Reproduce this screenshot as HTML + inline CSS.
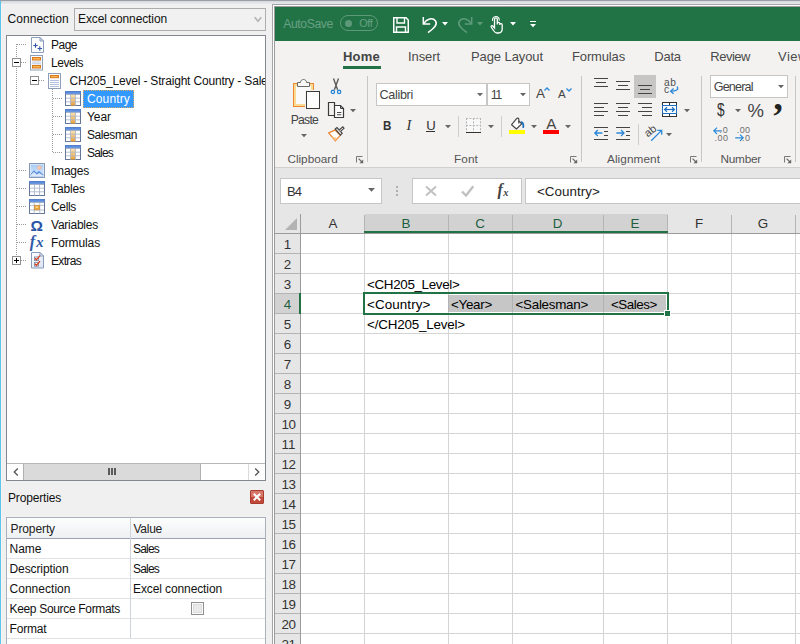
<!DOCTYPE html>
<html><head><meta charset="utf-8">
<style>
*{box-sizing:border-box;margin:0;padding:0}
html,body{width:800px;height:644px;overflow:hidden;background:#f0f0f0;font-family:"Liberation Sans",sans-serif;}
#root{position:relative;width:800px;height:644px;overflow:hidden;background:#f0f0f0}
.a{position:absolute}
.t{position:absolute;white-space:nowrap;line-height:1;color:#000}
svg{position:absolute;overflow:visible}
</style></head><body><div id="root">
<svg width="0" height="0" style="left:0;top:0"><defs><linearGradient id="og" x1="0" y1="0" x2="0" y2="1"><stop offset="0" stop-color="#fbe3b4"/><stop offset="1" stop-color="#eda032"/></linearGradient><linearGradient id="ig" x1="0" y1="0" x2="0" y2="1"><stop offset="0" stop-color="#a9cdf6"/><stop offset="1" stop-color="#d9e8fb"/></linearGradient><linearGradient id="eg" x1="0" y1="0" x2="1" y2="1"><stop offset="0" stop-color="#ffffff"/><stop offset="1" stop-color="#d9e3f2"/></linearGradient></defs></svg>
<div class="a" style="left:0px;top:0px;width:800px;height:1px;background:#9b9ea4;"></div>
<div class="a" style="left:0px;top:1px;width:800px;height:3px;background:linear-gradient(#d4d8de,#e8eaee);"></div>
<div class="a" style="left:0px;top:1px;width:1px;height:643px;background:#5bc5ee;"></div>
<div class="a" style="left:1px;top:4px;width:1px;height:640px;background:#fbf3f1;"></div>
<div class="t" style="left:7.50px;top:13.00px;font-size:12px;color:#111;letter-spacing:0.050px;">Connection</div>
<div class="a" style="left:74px;top:8px;width:192px;height:23px;background:#f1f1f1;border:1px solid #adadad"></div>
<div class="t" style="left:78.00px;top:13.00px;font-size:12px;color:#111;letter-spacing:-0.107px;">Excel connection</div>
<svg style="left:254px;top:16px" width="9" height="8" viewBox="0 0 9 8"><path d="M0.7 1.3 L4 5.2 L7.3 1.3" fill="none" stroke="#b4b4b4" stroke-width="1.7"/></svg>
<div class="a" style="left:6px;top:35px;width:260px;height:446px;background:#fff;border:1px solid #828790"></div>
<div class="a" style="left:16px;top:44px;width:1px;height:217px;background:repeating-linear-gradient(180deg,#9a9a9a 0 1px,transparent 1px 2px);"></div>
<div class="a" style="left:17px;top:44px;width:10px;height:1px;background:repeating-linear-gradient(90deg,#9a9a9a 0 1px,transparent 1px 2px);"></div>
<div class="a" style="left:17px;top:62px;width:10px;height:1px;background:repeating-linear-gradient(90deg,#9a9a9a 0 1px,transparent 1px 2px);"></div>
<div class="a" style="left:17px;top:170px;width:10px;height:1px;background:repeating-linear-gradient(90deg,#9a9a9a 0 1px,transparent 1px 2px);"></div>
<div class="a" style="left:17px;top:188px;width:10px;height:1px;background:repeating-linear-gradient(90deg,#9a9a9a 0 1px,transparent 1px 2px);"></div>
<div class="a" style="left:17px;top:206px;width:10px;height:1px;background:repeating-linear-gradient(90deg,#9a9a9a 0 1px,transparent 1px 2px);"></div>
<div class="a" style="left:17px;top:224px;width:10px;height:1px;background:repeating-linear-gradient(90deg,#9a9a9a 0 1px,transparent 1px 2px);"></div>
<div class="a" style="left:17px;top:242px;width:10px;height:1px;background:repeating-linear-gradient(90deg,#9a9a9a 0 1px,transparent 1px 2px);"></div>
<div class="a" style="left:17px;top:260px;width:10px;height:1px;background:repeating-linear-gradient(90deg,#9a9a9a 0 1px,transparent 1px 2px);"></div>
<div class="a" style="left:39px;top:80px;width:6px;height:1px;background:repeating-linear-gradient(90deg,#9a9a9a 0 1px,transparent 1px 2px);"></div>
<div class="a" style="left:52px;top:89px;width:1px;height:64px;background:repeating-linear-gradient(180deg,#9a9a9a 0 1px,transparent 1px 2px);"></div>
<div class="a" style="left:53px;top:98px;width:10px;height:1px;background:repeating-linear-gradient(90deg,#9a9a9a 0 1px,transparent 1px 2px);"></div>
<div class="a" style="left:53px;top:116px;width:10px;height:1px;background:repeating-linear-gradient(90deg,#9a9a9a 0 1px,transparent 1px 2px);"></div>
<div class="a" style="left:53px;top:134px;width:10px;height:1px;background:repeating-linear-gradient(90deg,#9a9a9a 0 1px,transparent 1px 2px);"></div>
<div class="a" style="left:53px;top:152px;width:10px;height:1px;background:repeating-linear-gradient(90deg,#9a9a9a 0 1px,transparent 1px 2px);"></div>
<svg style="left:12px;top:58px" width="9" height="9" viewBox="0 0 9 9"><rect x="0.5" y="0.5" width="8" height="8" fill="#fff" stroke="#919191"/><path d="M2 4.5H7" stroke="#000" stroke-width="1"/></svg>
<svg style="left:30px;top:76px" width="9" height="9" viewBox="0 0 9 9"><rect x="0.5" y="0.5" width="8" height="8" fill="#fff" stroke="#919191"/><path d="M2 4.5H7" stroke="#000" stroke-width="1"/></svg>
<svg style="left:12px;top:256px" width="9" height="9" viewBox="0 0 9 9"><rect x="0.5" y="0.5" width="8" height="8" fill="#fff" stroke="#919191"/><path d="M2 4.5H7" stroke="#000" stroke-width="1"/><path d="M4.5 2V7" stroke="#000" stroke-width="1"/></svg>
<svg style="left:31px;top:37px" width="14" height="16" viewBox="0 0 14 16"><path d="M0.5 0.5H9L12.5 4V15.5H0.5Z" fill="#fdfdfe" stroke="#8a9cbc"/><path d="M9 0.5V4H12.5Z" fill="#dce4f0" stroke="#8a9cbc" stroke-linejoin="round"/><path d="M2.3 8.5H6.7M4.5 6.3V10.7M6.6 11.5H11M8.8 9.3V13.7" stroke="#2f55a8" stroke-width="1.1" fill="none"/></svg>
<div class="t" style="left:51.00px;top:39.00px;font-size:12px;color:#111;letter-spacing:-0.506px;">Page</div>
<svg style="left:30px;top:55px" width="14" height="16" viewBox="0 0 14 16"><rect x="0.5" y="0.5" width="12" height="14.5" fill="#fdfdfe" stroke="#8e9db8"/><rect x="2.5" y="2.5" width="8" height="2.5" fill="#f7b458" stroke="#d9791a"/><rect x="2.5" y="10.5" width="8" height="2.5" fill="#f7b458" stroke="#d9791a"/><path d="M2 7H11M2 8.8H11" stroke="#b4c3e0" stroke-width="0.9"/></svg>
<div class="t" style="left:51.00px;top:57.00px;font-size:12px;color:#111;letter-spacing:-0.448px;">Levels</div>
<svg style="left:48px;top:73px" width="14" height="16" viewBox="0 0 14 16"><rect x="0.5" y="0.5" width="12" height="15" fill="#fdfdfe" stroke="#8e9db8"/><rect x="2.5" y="2.5" width="8" height="2.2" fill="#f7b458" stroke="#d9791a"/><path d="M2 7.5H11M2 9.5H11M2 11.5H11M2 13.5H11" stroke="#a9badb" stroke-width="0.9"/></svg>
<div class="a" style="left:69px;top:71px;width:196px;height:18px;overflow:hidden">
<div class="t" style="left:0.50px;top:4.00px;font-size:12px;color:#111;letter-spacing:-0.18px;">CH205_Level - Straight Country - Sales</div>
</div>
<svg style="left:65px;top:91px" width="16" height="15" viewBox="0 0 16 15"><rect x="0.5" y="0.5" width="15" height="14" fill="#fff" stroke="#66789a"/><rect x="0.5" y="0.5" width="15" height="2.2" fill="#5a8de0" stroke="#4d7fd4" stroke-width="0.5"/><rect x="5.6" y="3.6" width="4.8" height="10.9" fill="url(#og)"/><path d="M1 7.2H15M1 10.8H15M5.5 3.5V14.5M10.5 3.5V14.5" stroke="#aeb8c9" stroke-width="0.9" fill="none"/><path d="M1 3.5H15" stroke="#8ea0bf" stroke-width="0.8"/></svg>
<div class="a" style="left:83px;top:90px;width:51px;height:18px;background:#3399ff;border:1px dotted #d9a66a"></div>
<div class="t" style="left:87.00px;top:93.00px;font-size:12px;color:#fff;letter-spacing:0.141px;">Country</div>
<svg style="left:65px;top:109px" width="16" height="15" viewBox="0 0 16 15"><rect x="0.5" y="0.5" width="15" height="14" fill="#fff" stroke="#66789a"/><rect x="0.5" y="0.5" width="15" height="2.2" fill="#5a8de0" stroke="#4d7fd4" stroke-width="0.5"/><rect x="5.6" y="3.6" width="4.8" height="10.9" fill="url(#og)"/><path d="M1 7.2H15M1 10.8H15M5.5 3.5V14.5M10.5 3.5V14.5" stroke="#aeb8c9" stroke-width="0.9" fill="none"/><path d="M1 3.5H15" stroke="#8ea0bf" stroke-width="0.8"/></svg>
<div class="t" style="left:87.00px;top:111.00px;font-size:12px;color:#111;letter-spacing:-0.061px;">Year</div>
<svg style="left:65px;top:127px" width="16" height="15" viewBox="0 0 16 15"><rect x="0.5" y="0.5" width="15" height="14" fill="#fff" stroke="#66789a"/><rect x="0.5" y="0.5" width="15" height="2.2" fill="#5a8de0" stroke="#4d7fd4" stroke-width="0.5"/><rect x="5.6" y="3.6" width="4.8" height="10.9" fill="url(#og)"/><path d="M1 7.2H15M1 10.8H15M5.5 3.5V14.5M10.5 3.5V14.5" stroke="#aeb8c9" stroke-width="0.9" fill="none"/><path d="M1 3.5H15" stroke="#8ea0bf" stroke-width="0.8"/></svg>
<div class="t" style="left:87.00px;top:129.00px;font-size:12px;color:#111;letter-spacing:-0.420px;">Salesman</div>
<svg style="left:65px;top:145px" width="16" height="15" viewBox="0 0 16 15"><rect x="0.5" y="0.5" width="15" height="14" fill="#fff" stroke="#66789a"/><rect x="0.5" y="0.5" width="15" height="2.2" fill="#5a8de0" stroke="#4d7fd4" stroke-width="0.5"/><rect x="5.6" y="3.6" width="4.8" height="10.9" fill="url(#og)"/><path d="M1 7.2H15M1 10.8H15M5.5 3.5V14.5M10.5 3.5V14.5" stroke="#aeb8c9" stroke-width="0.9" fill="none"/><path d="M1 3.5H15" stroke="#8ea0bf" stroke-width="0.8"/></svg>
<div class="t" style="left:87.00px;top:147.00px;font-size:12px;color:#111;letter-spacing:-0.803px;">Sales</div>
<svg style="left:29px;top:163px" width="16" height="15" viewBox="0 0 16 15"><rect x="0.5" y="0.5" width="15" height="14" fill="#eef3fa" stroke="#8597b3"/><rect x="1.6" y="1.6" width="12.8" height="11.8" fill="url(#ig)"/><circle cx="10.3" cy="4.6" r="2.1" fill="#f9b392"/><circle cx="10.3" cy="4.6" r="1.1" fill="#fdd5bd"/><path d="M1.6 11L5 7.3L7.6 9.8L10 8L14.4 11.5V13.4H1.6Z" fill="#5c8fde"/><path d="M1.6 12L5 9L7.8 11.4L10.2 10L14.4 12.6V13.4H1.6Z" fill="#dbe7fa"/></svg>
<div class="t" style="left:51.00px;top:165.00px;font-size:12px;color:#111;letter-spacing:-0.225px;">Images</div>
<svg style="left:29px;top:181px" width="16" height="15" viewBox="0 0 16 15"><rect x="0.5" y="0.5" width="15" height="14" fill="#fff" stroke="#66789a"/><rect x="0.5" y="0.5" width="15" height="2.2" fill="#5a8de0" stroke="#4d7fd4" stroke-width="0.5"/><path d="M1 7.2H15M1 10.8H15M5.5 3.5V14.5M10.5 3.5V14.5" stroke="#aeb8c9" stroke-width="0.9" fill="none"/><path d="M1 3.5H15" stroke="#8ea0bf" stroke-width="0.8"/></svg>
<div class="t" style="left:51.00px;top:183.00px;font-size:12px;color:#111;letter-spacing:-0.114px;">Tables</div>
<svg style="left:29px;top:199px" width="16" height="15" viewBox="0 0 16 15"><rect x="0.5" y="0.5" width="15" height="14" fill="#fff" stroke="#66789a"/><rect x="0.5" y="0.5" width="15" height="2.2" fill="#5a8de0" stroke="#4d7fd4" stroke-width="0.5"/><path d="M1 6.4H15M1 11H15M5.2 3.5V14.5M10.8 3.5V14.5" stroke="#aeb8c9" stroke-width="0.9" fill="none"/><rect x="5.6" y="6.6" width="4.9" height="4.2" fill="#f0a93c" stroke="#c98a2a" stroke-width="0.7"/><rect x="6.6" y="7.4" width="2.4" height="1.6" fill="#fbd58c"/><path d="M1 3.5H15" stroke="#8ea0bf" stroke-width="0.8"/></svg>
<div class="t" style="left:51.00px;top:201.00px;font-size:12px;color:#111;letter-spacing:-0.334px;">Cells</div>
<div class="t" style="left:30.60px;top:218.00px;font-size:15.5px;color:#2a55a5;font-weight:bold;">Ω</div>
<div class="t" style="left:51.00px;top:219.00px;font-size:12px;color:#111;letter-spacing:-0.237px;">Variables</div>
<div class="t" style="left:29.80px;top:234.00px;font-size:16px;color:#3059a8;font-weight:bold;font-style:italic;font-family:'Liberation Serif',serif;">f</div>
<div class="t" style="left:36.30px;top:235.00px;font-size:14.5px;color:#3059a8;font-weight:bold;font-style:italic;font-family:'Liberation Serif',serif;">x</div>
<div class="t" style="left:51.00px;top:237.00px;font-size:12px;color:#111;letter-spacing:-0.126px;">Formulas</div>
<svg style="left:31px;top:252px" width="14" height="17" viewBox="0 0 14 17"><path d="M0.5 0.5H9L12.5 4V16H0.5Z" fill="url(#eg)" stroke="#8a9cbc"/><path d="M9 0.5V4H12.5Z" fill="#eef2f8" stroke="#8a9cbc" stroke-linejoin="round"/><rect x="3.5" y="5" width="4" height="3.6" fill="#fff" stroke="#7f8fa8" stroke-width="0.9"/><rect x="3.5" y="10.6" width="4" height="3.6" fill="#fff" stroke="#7f8fa8" stroke-width="0.9"/><path d="M4 6.2L5.4 7.8L9 3.6M4 11.8L5.4 13.4L9 9.2" stroke="#d8401c" stroke-width="1.3" fill="none"/></svg>
<div class="t" style="left:51.00px;top:255.00px;font-size:12px;color:#111;letter-spacing:-0.668px;">Extras</div>
<div class="a" style="left:7px;top:463px;width:258px;height:17px;background:#fff;border-top:1px solid #b8b8b8"></div>
<div class="a" style="left:24px;top:464px;width:177px;height:16px;background:#dadada;border-right:1px solid #b0b0b0"></div>
<div class="a" style="left:7px;top:464px;width:17px;height:16px;background:#fff;"></div>
<div class="a" style="left:249px;top:464px;width:16px;height:16px;background:#fff;"></div>
<div class="a" style="left:23px;top:464px;width:1px;height:16px;background:#b0b0b0;"></div>
<div class="a" style="left:248px;top:464px;width:1px;height:16px;background:#dadada;"></div>
<svg style="left:12px;top:467px" width="8" height="10" viewBox="0 0 8 10"><path d="M5.8 1.5L2.2 5L5.8 8.5" fill="none" stroke="#505050" stroke-width="1.25"/></svg>
<svg style="left:253px;top:467px" width="8" height="10" viewBox="0 0 8 10"><path d="M2.2 1.5L5.8 5L2.2 8.5" fill="none" stroke="#505050" stroke-width="1.25"/></svg>
<div class="a" style="left:108px;top:468px;width:2px;height:7px;background:#5a5a5a;"></div>
<div class="a" style="left:111px;top:468px;width:2px;height:7px;background:#5a5a5a;"></div>
<div class="a" style="left:114px;top:468px;width:2px;height:7px;background:#5a5a5a;"></div>
<div class="t" style="left:8.00px;top:492.00px;font-size:12px;color:#111;letter-spacing:-0.169px;">Properties</div>
<div class="a" style="left:250px;top:490px;width:14px;height:14px;background:linear-gradient(#d9766a 0 50%,#c24a3a 50%);border:1px solid #a83c2f;border-radius:1px"></div>
<svg style="left:253px;top:493px" width="8" height="8" viewBox="0 0 8 8"><path d="M0.8 0.8L7.2 7.2M7.2 0.8L0.8 7.2" stroke="#fff" stroke-width="2"/></svg>
<div class="a" style="left:6px;top:517px;width:260px;height:127px;background:#fff;border:1px solid #a9b1bd;border-bottom:none"></div>
<div class="a" style="left:7px;top:518px;width:258px;height:20px;background:linear-gradient(#fdfdfd,#eef0f3);"></div>
<div class="a" style="left:7px;top:538px;width:258px;height:1px;background:#9aa3b2;"></div>
<div class="a" style="left:7px;top:558px;width:258px;height:1px;background:#dfe1e5;"></div>
<div class="a" style="left:7px;top:578px;width:258px;height:1px;background:#dfe1e5;"></div>
<div class="a" style="left:7px;top:598px;width:258px;height:1px;background:#dfe1e5;"></div>
<div class="a" style="left:7px;top:618px;width:258px;height:1px;background:#dfe1e5;"></div>
<div class="a" style="left:7px;top:638px;width:258px;height:1px;background:#dfe1e5;"></div>
<div class="a" style="left:130px;top:518px;width:1px;height:120px;background:#cfd3da;"></div>
<div class="t" style="left:10.50px;top:523.00px;font-size:12px;color:#222;letter-spacing:-0.106px;">Property</div>
<div class="t" style="left:133.50px;top:523.00px;font-size:12px;color:#222;letter-spacing:-0.260px;">Value</div>
<div class="t" style="left:9.50px;top:543.00px;font-size:12px;color:#111;letter-spacing:-0.002px;">Name</div>
<div class="t" style="left:133.00px;top:543.00px;font-size:12px;color:#111;letter-spacing:-0.803px;">Sales</div>
<div class="t" style="left:9.50px;top:563.00px;font-size:12px;color:#111;letter-spacing:-0.093px;">Description</div>
<div class="t" style="left:133.00px;top:563.00px;font-size:12px;color:#111;letter-spacing:-0.803px;">Sales</div>
<div class="t" style="left:9.50px;top:583.00px;font-size:12px;color:#111;letter-spacing:0.030px;">Connection</div>
<div class="t" style="left:133.00px;top:583.00px;font-size:12px;color:#111;letter-spacing:-0.107px;">Excel connection</div>
<div class="t" style="left:9.50px;top:603.00px;font-size:12px;color:#111;letter-spacing:-0.327px;">Keep Source Formats</div>
<div class="t" style="left:9.50px;top:623.00px;font-size:12px;color:#111;letter-spacing:-0.167px;">Format</div>
<div class="a" style="left:191px;top:602px;width:13px;height:13px;background:#e9e9e9;border:1px solid #8e8f8f;box-shadow:inset 0 0 0 1px #fbfbfb, inset 0 0 0 2px #dcdcdc"></div>
<div class="a" style="left:272px;top:4px;width:528px;height:640px;background:#a5a5a5;"></div>
<div class="a" style="left:273px;top:5px;width:527px;height:639px;background:#fff;"></div>
<div class="a" style="left:274px;top:6px;width:526px;height:638px;background:#9c9c9c;"></div>
<div class="a" style="left:275px;top:7px;width:525px;height:34px;background:#217346;"></div>
<div class="t" style="left:283.20px;top:18.00px;font-size:12.2px;color:#68a084;letter-spacing:-0.388px;">AutoSave</div>
<div class="a" style="left:340px;top:15px;width:38px;height:16px;background:transparent;border:1px solid #5e9a7a;border-radius:8px"></div>
<div class="a" style="left:345px;top:19.5px;width:7px;height:7px;background:#5e9a7a;border-radius:4px"></div>
<div class="t" style="left:359.20px;top:18.00px;font-size:10.8px;color:#68a084;letter-spacing:-0.335px;">Off</div>
<svg style="left:393px;top:17px" width="16" height="16" viewBox="0 0 16 16"><path d="M0.75 0.75H13L15.25 3V15.25H0.75Z" fill="none" stroke="#fff" stroke-width="1.5"/><path d="M4 1V6H11.5V1M3.5 15V10H12.5V15" fill="none" stroke="#fff" stroke-width="1.4"/></svg>
<svg style="left:422px;top:16px" width="16" height="17" viewBox="0 0 16 17"><path d="M1.3 1V8H8.2" fill="none" stroke="#fff" stroke-width="1.5"/><path d="M1.8 7.5C4.5 3 10.5 1 13.5 5C16 8.5 12.5 12 6 16.7" fill="none" stroke="#fff" stroke-width="1.5"/></svg>
<svg style="left:442px;top:22px" width="6" height="4" viewBox="0 0 6 4"><path d="M0 0H6L3 3.4Z" fill="#fff"/></svg>
<svg style="left:457px;top:16px" width="16" height="17" viewBox="0 0 16 17"><path d="M14.7 1V8H7.8" fill="none" stroke="#5e9a7a" stroke-width="1.5"/><path d="M14.2 7.5C11.5 3 5.5 1 2.5 5C0 8.5 3.5 12 10 16.7" fill="none" stroke="#5e9a7a" stroke-width="1.5"/></svg>
<svg style="left:477px;top:22px" width="6" height="4" viewBox="0 0 6 4"><path d="M0 0H6L3 3.4Z" fill="#5e9a7a"/></svg>
<svg style="left:490px;top:15.5px" width="13" height="18" viewBox="0 0 13 18"><path d="M4.5 9V3.2A1.4 1.4 0 0 1 7.3 3.2V8.5M7.3 8V7.2A1.3 1.3 0 0 1 9.8 7.4V9M9.8 8.6A1.2 1.2 0 0 1 12.2 9V12.5C12.2 15 10.8 17 8.5 17H7C5.5 17 4.5 16 3.5 14.5L1.2 11C0.8 10 2 9.2 3 10.2L4.5 12V9" fill="none" stroke="#fff" stroke-width="1.3"/><path d="M2.6 4.8A3.4 3.4 0 1 1 9.2 4.6" fill="none" stroke="#fff" stroke-width="1.1"/></svg>
<svg style="left:510px;top:22px" width="6" height="4" viewBox="0 0 6 4"><path d="M0 0H6L3 3.4Z" fill="#fff"/></svg>
<div class="a" style="left:530px;top:21px;width:6px;height:1.4px;background:#fff;"></div>
<svg style="left:530px;top:24px" width="6" height="4" viewBox="0 0 6 4"><path d="M0 0H6L3 3.2Z" fill="#fff"/></svg>
<div class="a" style="left:275px;top:41px;width:525px;height:126px;background:#f3f2f1;"></div>
<div class="a" style="left:275px;top:167px;width:525px;height:1px;background:#d2d0ce;"></div>
<div class="t" style="left:343.00px;top:50.00px;font-size:13px;color:#444;letter-spacing:0.221px;font-weight:bold;">Home</div>
<div class="a" style="left:343px;top:66px;width:38px;height:3px;background:#217346;"></div>
<div class="t" style="left:408.00px;top:50.00px;font-size:13px;color:#4a4a4a;letter-spacing:-0.085px;">Insert</div>
<div class="t" style="left:471.00px;top:50.00px;font-size:13px;color:#4a4a4a;letter-spacing:-0.091px;">Page Layout</div>
<div class="t" style="left:572.00px;top:50.00px;font-size:13px;color:#4a4a4a;letter-spacing:-0.147px;">Formulas</div>
<div class="t" style="left:654.30px;top:50.00px;font-size:13px;color:#4a4a4a;letter-spacing:-0.240px;">Data</div>
<div class="t" style="left:710.30px;top:50.00px;font-size:13px;color:#4a4a4a;letter-spacing:-0.487px;">Review</div>
<div class="t" style="left:778.00px;top:50.00px;font-size:13px;color:#4a4a4a;letter-spacing:0.515px;">View</div>
<div class="a" style="left:367px;top:76px;width:1px;height:86px;background:#c8c6c4;"></div>
<div class="a" style="left:581px;top:76px;width:1px;height:86px;background:#c8c6c4;"></div>
<div class="a" style="left:701px;top:76px;width:1px;height:86px;background:#c8c6c4;"></div>
<div class="a" style="left:795px;top:76px;width:1px;height:86px;background:#c8c6c4;"></div>
<div class="t" style="left:287.40px;top:154.00px;font-size:11.8px;color:#555;letter-spacing:-0.012px;">Clipboard</div>
<div class="t" style="left:454.00px;top:154.00px;font-size:11.8px;color:#555;letter-spacing:0.098px;">Font</div>
<div class="t" style="left:607.00px;top:154.00px;font-size:11.8px;color:#555;letter-spacing:0.059px;">Alignment</div>
<div class="t" style="left:720.50px;top:154.00px;font-size:11.8px;color:#555;letter-spacing:-0.244px;">Number</div>
<svg style="left:356px;top:156px" width="8" height="8" viewBox="0 0 8 8"><path d="M0.5 6.5V0.5H6.5" fill="none" stroke="#777"/><path d="M2.6 2.6L6 6" fill="none" stroke="#666" stroke-width="1.1"/><path d="M7.2 3.4V7.2H3.4Z" fill="#666"/></svg>
<svg style="left:570px;top:156px" width="8" height="8" viewBox="0 0 8 8"><path d="M0.5 6.5V0.5H6.5" fill="none" stroke="#777"/><path d="M2.6 2.6L6 6" fill="none" stroke="#666" stroke-width="1.1"/><path d="M7.2 3.4V7.2H3.4Z" fill="#666"/></svg>
<svg style="left:690px;top:156px" width="8" height="8" viewBox="0 0 8 8"><path d="M0.5 6.5V0.5H6.5" fill="none" stroke="#777"/><path d="M2.6 2.6L6 6" fill="none" stroke="#666" stroke-width="1.1"/><path d="M7.2 3.4V7.2H3.4Z" fill="#666"/></svg>
<svg style="left:784px;top:156px" width="8" height="8" viewBox="0 0 8 8"><path d="M0.5 6.5V0.5H6.5" fill="none" stroke="#777"/><path d="M2.6 2.6L6 6" fill="none" stroke="#666" stroke-width="1.1"/><path d="M7.2 3.4V7.2H3.4Z" fill="#666"/></svg>
<div class="a" style="left:275px;top:168px;width:525px;height:46px;background:#e6e6e6;"></div>
<div class="a" style="left:280px;top:178px;width:102px;height:26px;background:#fff;border:1px solid #c6c6c6"></div>
<div class="t" style="left:287.00px;top:185.00px;font-size:13px;color:#333;letter-spacing:-0.950px;">B4</div>
<svg style="left:368px;top:188px" width="7" height="4" viewBox="0 0 7 4"><path d="M0 0H7L3.5 3.8Z" fill="#666"/></svg>
<div class="a" style="left:396px;top:186px;width:2px;height:2px;background:#b0b0b0;"></div>
<div class="a" style="left:396px;top:190px;width:2px;height:2px;background:#b0b0b0;"></div>
<div class="a" style="left:396px;top:194px;width:2px;height:2px;background:#b0b0b0;"></div>
<div class="a" style="left:412px;top:178px;width:110px;height:26px;background:#fff;border:1px solid #c6c6c6"></div>
<svg style="left:425px;top:186px" width="12" height="10" viewBox="0 0 12 10"><path d="M1 0.5L11 9.5M11 0.5L1 9.5" stroke="#c0c0c0" stroke-width="1.9"/></svg>
<svg style="left:461px;top:185px" width="13" height="12" viewBox="0 0 13 12"><path d="M1 6.5L5 10.5L12.3 1.2" fill="none" stroke="#c0c0c0" stroke-width="2.4"/></svg>
<div class="t" style="left:497.50px;top:182.00px;font-size:16px;color:#444;font-weight:bold;font-style:italic;font-family:'Liberation Serif',serif;">f</div>
<div class="t" style="left:503.20px;top:188.00px;font-size:10.5px;color:#444;font-weight:bold;font-style:italic;font-family:'Liberation Serif',serif;">x</div>
<div class="a" style="left:525px;top:178px;width:280px;height:26px;background:#fff;border:1px solid #c6c6c6"></div>
<div class="t" style="left:537.00px;top:185.00px;font-size:13.4px;color:#222;letter-spacing:0.048px;">&lt;Country&gt;</div>
<div class="a" style="left:275px;top:214px;width:525px;height:430px;background:#fff;"></div>
<div class="a" style="left:275px;top:214px;width:525px;height:19px;background:#e6e6e6;"></div>
<div class="a" style="left:275px;top:233px;width:25px;height:411px;background:#e6e6e6;"></div>
<div class="a" style="left:365px;top:214px;width:303px;height:19px;background:#d2d2d2;"></div>
<div class="a" style="left:275px;top:294px;width:25px;height:19px;background:#d2d2d2;"></div>
<div class="a" style="left:364px;top:234px;width:1px;height:410px;background:#d4d4d4;"></div>
<div class="a" style="left:364px;top:215px;width:1px;height:18px;background:#b4b4b4;"></div>
<div class="a" style="left:448px;top:234px;width:1px;height:410px;background:#d4d4d4;"></div>
<div class="a" style="left:448px;top:215px;width:1px;height:18px;background:#b4b4b4;"></div>
<div class="a" style="left:512px;top:234px;width:1px;height:410px;background:#d4d4d4;"></div>
<div class="a" style="left:512px;top:215px;width:1px;height:18px;background:#b4b4b4;"></div>
<div class="a" style="left:603px;top:234px;width:1px;height:410px;background:#d4d4d4;"></div>
<div class="a" style="left:603px;top:215px;width:1px;height:18px;background:#b4b4b4;"></div>
<div class="a" style="left:667px;top:234px;width:1px;height:410px;background:#d4d4d4;"></div>
<div class="a" style="left:667px;top:215px;width:1px;height:18px;background:#b4b4b4;"></div>
<div class="a" style="left:731px;top:234px;width:1px;height:410px;background:#d4d4d4;"></div>
<div class="a" style="left:731px;top:215px;width:1px;height:18px;background:#b4b4b4;"></div>
<div class="a" style="left:795px;top:234px;width:1px;height:410px;background:#d4d4d4;"></div>
<div class="a" style="left:795px;top:215px;width:1px;height:18px;background:#b4b4b4;"></div>
<div class="a" style="left:301px;top:253px;width:499px;height:1px;background:#d4d4d4;"></div>
<div class="a" style="left:275px;top:253px;width:25px;height:1px;background:#b4b4b4;"></div>
<div class="a" style="left:301px;top:273px;width:499px;height:1px;background:#d4d4d4;"></div>
<div class="a" style="left:275px;top:273px;width:25px;height:1px;background:#b4b4b4;"></div>
<div class="a" style="left:301px;top:293px;width:499px;height:1px;background:#d4d4d4;"></div>
<div class="a" style="left:275px;top:293px;width:25px;height:1px;background:#b4b4b4;"></div>
<div class="a" style="left:301px;top:313px;width:499px;height:1px;background:#d4d4d4;"></div>
<div class="a" style="left:275px;top:313px;width:25px;height:1px;background:#b4b4b4;"></div>
<div class="a" style="left:301px;top:333px;width:499px;height:1px;background:#d4d4d4;"></div>
<div class="a" style="left:275px;top:333px;width:25px;height:1px;background:#b4b4b4;"></div>
<div class="a" style="left:301px;top:353px;width:499px;height:1px;background:#d4d4d4;"></div>
<div class="a" style="left:275px;top:353px;width:25px;height:1px;background:#b4b4b4;"></div>
<div class="a" style="left:301px;top:373px;width:499px;height:1px;background:#d4d4d4;"></div>
<div class="a" style="left:275px;top:373px;width:25px;height:1px;background:#b4b4b4;"></div>
<div class="a" style="left:301px;top:393px;width:499px;height:1px;background:#d4d4d4;"></div>
<div class="a" style="left:275px;top:393px;width:25px;height:1px;background:#b4b4b4;"></div>
<div class="a" style="left:301px;top:413px;width:499px;height:1px;background:#d4d4d4;"></div>
<div class="a" style="left:275px;top:413px;width:25px;height:1px;background:#b4b4b4;"></div>
<div class="a" style="left:301px;top:433px;width:499px;height:1px;background:#d4d4d4;"></div>
<div class="a" style="left:275px;top:433px;width:25px;height:1px;background:#b4b4b4;"></div>
<div class="a" style="left:301px;top:453px;width:499px;height:1px;background:#d4d4d4;"></div>
<div class="a" style="left:275px;top:453px;width:25px;height:1px;background:#b4b4b4;"></div>
<div class="a" style="left:301px;top:473px;width:499px;height:1px;background:#d4d4d4;"></div>
<div class="a" style="left:275px;top:473px;width:25px;height:1px;background:#b4b4b4;"></div>
<div class="a" style="left:301px;top:493px;width:499px;height:1px;background:#d4d4d4;"></div>
<div class="a" style="left:275px;top:493px;width:25px;height:1px;background:#b4b4b4;"></div>
<div class="a" style="left:301px;top:513px;width:499px;height:1px;background:#d4d4d4;"></div>
<div class="a" style="left:275px;top:513px;width:25px;height:1px;background:#b4b4b4;"></div>
<div class="a" style="left:301px;top:533px;width:499px;height:1px;background:#d4d4d4;"></div>
<div class="a" style="left:275px;top:533px;width:25px;height:1px;background:#b4b4b4;"></div>
<div class="a" style="left:301px;top:553px;width:499px;height:1px;background:#d4d4d4;"></div>
<div class="a" style="left:275px;top:553px;width:25px;height:1px;background:#b4b4b4;"></div>
<div class="a" style="left:301px;top:573px;width:499px;height:1px;background:#d4d4d4;"></div>
<div class="a" style="left:275px;top:573px;width:25px;height:1px;background:#b4b4b4;"></div>
<div class="a" style="left:301px;top:593px;width:499px;height:1px;background:#d4d4d4;"></div>
<div class="a" style="left:275px;top:593px;width:25px;height:1px;background:#b4b4b4;"></div>
<div class="a" style="left:301px;top:613px;width:499px;height:1px;background:#d4d4d4;"></div>
<div class="a" style="left:275px;top:613px;width:25px;height:1px;background:#b4b4b4;"></div>
<div class="a" style="left:301px;top:633px;width:499px;height:1px;background:#d4d4d4;"></div>
<div class="a" style="left:275px;top:633px;width:25px;height:1px;background:#b4b4b4;"></div>
<div class="a" style="left:301px;top:653px;width:499px;height:1px;background:#d4d4d4;"></div>
<div class="a" style="left:275px;top:653px;width:25px;height:1px;background:#b4b4b4;"></div>
<div class="a" style="left:275px;top:233px;width:525px;height:1px;background:#9b9b9b;"></div>
<div class="a" style="left:300px;top:214px;width:1px;height:430px;background:#9b9b9b;"></div>
<div class="a" style="left:364px;top:231px;width:304px;height:2px;background:#217346;"></div>
<div class="a" style="left:299px;top:293px;width:2px;height:21px;background:#217346;"></div>
<svg style="left:285px;top:218px" width="12" height="12" viewBox="0 0 12 12"><path d="M12 0V12H0Z" fill="#b3b3b3"/></svg>
<div class="t" style="left:328.53px;top:217.00px;font-size:13.4px;color:#333;">A</div>
<div class="t" style="left:401.53px;top:217.00px;font-size:13.4px;color:#1f5f40;">B</div>
<div class="t" style="left:475.16px;top:217.00px;font-size:13.4px;color:#1f5f40;">C</div>
<div class="t" style="left:552.66px;top:217.00px;font-size:13.4px;color:#1f5f40;">D</div>
<div class="t" style="left:630.53px;top:217.00px;font-size:13.4px;color:#1f5f40;">E</div>
<div class="t" style="left:694.91px;top:217.00px;font-size:13.4px;color:#333;">F</div>
<div class="t" style="left:757.79px;top:217.00px;font-size:13.4px;color:#333;">G</div>
<div class="t" style="left:283.77px;top:238.00px;font-size:13.4px;color:#333;">1</div>
<div class="t" style="left:283.77px;top:258.00px;font-size:13.4px;color:#333;">2</div>
<div class="t" style="left:283.77px;top:278.00px;font-size:13.4px;color:#333;">3</div>
<div class="t" style="left:283.77px;top:298.00px;font-size:13.4px;color:#1f5f40;">4</div>
<div class="t" style="left:283.77px;top:318.00px;font-size:13.4px;color:#333;">5</div>
<div class="t" style="left:283.77px;top:338.00px;font-size:13.4px;color:#333;">6</div>
<div class="t" style="left:283.77px;top:358.00px;font-size:13.4px;color:#333;">7</div>
<div class="t" style="left:283.77px;top:378.00px;font-size:13.4px;color:#333;">8</div>
<div class="t" style="left:283.77px;top:398.00px;font-size:13.4px;color:#333;">9</div>
<div class="t" style="left:281.60px;top:418.00px;font-size:13.4px;color:#333;letter-spacing:-0.602px;">10</div>
<div class="t" style="left:281.60px;top:438.00px;font-size:13.4px;color:#333;letter-spacing:-0.104px;">11</div>
<div class="t" style="left:281.60px;top:458.00px;font-size:13.4px;color:#333;letter-spacing:-0.602px;">12</div>
<div class="t" style="left:281.60px;top:478.00px;font-size:13.4px;color:#333;letter-spacing:-0.602px;">13</div>
<div class="t" style="left:281.60px;top:498.00px;font-size:13.4px;color:#333;letter-spacing:-0.602px;">14</div>
<div class="t" style="left:281.60px;top:518.00px;font-size:13.4px;color:#333;letter-spacing:-0.602px;">15</div>
<div class="t" style="left:281.60px;top:538.00px;font-size:13.4px;color:#333;letter-spacing:-0.602px;">16</div>
<div class="t" style="left:281.60px;top:558.00px;font-size:13.4px;color:#333;letter-spacing:-0.602px;">17</div>
<div class="t" style="left:281.60px;top:578.00px;font-size:13.4px;color:#333;letter-spacing:-0.602px;">18</div>
<div class="t" style="left:281.60px;top:598.00px;font-size:13.4px;color:#333;letter-spacing:-0.602px;">19</div>
<div class="t" style="left:281.60px;top:618.00px;font-size:13.4px;color:#333;letter-spacing:-0.602px;">20</div>
<div class="t" style="left:281.60px;top:638.00px;font-size:13.4px;color:#333;letter-spacing:-0.602px;">21</div>
<div class="t" style="left:367.00px;top:278.00px;font-size:13.4px;color:#000;letter-spacing:-0.334px;">&lt;CH205_Level&gt;</div>
<div class="t" style="left:367.00px;top:318.00px;font-size:13.4px;color:#000;letter-spacing:-0.184px;">&lt;/CH205_Level&gt;</div>
<div class="a" style="left:448px;top:295px;width:218px;height:17px;background:#c6c6c6;"></div>
<div class="a" style="left:448px;top:295px;width:1px;height:17px;background:#b2b2b2;"></div>
<div class="a" style="left:512px;top:295px;width:1px;height:17px;background:#b2b2b2;"></div>
<div class="a" style="left:603px;top:295px;width:1px;height:17px;background:#b2b2b2;"></div>
<div class="t" style="left:367.00px;top:298.00px;font-size:13.4px;color:#000;letter-spacing:0.103px;">&lt;Country&gt;</div>
<div class="t" style="left:451.00px;top:298.00px;font-size:13.4px;color:#000;letter-spacing:-0.288px;">&lt;Year&gt;</div>
<div class="t" style="left:515.50px;top:298.00px;font-size:13.4px;color:#000;letter-spacing:-0.274px;">&lt;Salesman&gt;</div>
<div class="t" style="left:611.00px;top:298.00px;font-size:13.4px;color:#000;letter-spacing:-0.453px;">&lt;Sales&gt;</div>
<div class="a" style="left:363px;top:292px;width:306px;height:23px;background:transparent;border:2px solid #217346"></div>
<div class="a" style="left:664px;top:310px;width:7px;height:7px;background:#fff;"></div>
<div class="a" style="left:665px;top:311px;width:5px;height:5px;background:#217346;"></div>
<svg style="left:292px;top:78px" width="30" height="32" viewBox="0 0 30 32"><rect x="1.5" y="5.5" width="20" height="23" fill="#fafafa" stroke="#ed8733"/><rect x="3" y="7" width="17" height="20" fill="none" stroke="#f9db94" stroke-width="2"/><path d="M5.5 8.5V4.5H8.5C8.5 0.5 14.5 0.5 14.5 4.5H17.5V8.5Z" fill="#fafafa" stroke="#6a6a6a"/><rect x="13" y="12" width="16" height="19" fill="#f3f2f1"/><rect x="14.5" y="13.5" width="13" height="17" fill="#fdfdfd" stroke="#3a3a3a"/></svg>
<div class="t" style="left:290.70px;top:114.00px;font-size:12.2px;color:#444;letter-spacing:-0.739px;">Paste</div>
<svg style="left:300.5px;top:134px" width="6" height="4" viewBox="0 0 6 4"><path d="M0 0H6L3 3.2Z" fill="#666"/></svg>
<svg style="left:330px;top:78px" width="12" height="17" viewBox="0 0 12 17"><path d="M3.5 0.4L7.6 11.8M8.5 0.4L4.4 11.8" stroke="#585858" stroke-width="1.35" fill="none"/><circle cx="2.9" cy="13.9" r="1.65" fill="#f3f2f1" stroke="#2b88d8" stroke-width="1.3"/><circle cx="9.1" cy="13.9" r="1.65" fill="#f3f2f1" stroke="#2b88d8" stroke-width="1.3"/></svg>
<svg style="left:328px;top:102px" width="17" height="17" viewBox="0 0 17 17"><path d="M6.5 3.5V0.5H0.5V13.5H6.5" fill="none" stroke="#3a3a3a" stroke-width="1.2"/><path d="M6.5 3.5H12.5L15.5 6.5V15.5H6.5Z" fill="#fdfdfd" stroke="#3a3a3a" stroke-width="1.2"/><path d="M12.5 3.5V6.5H15.5" fill="none" stroke="#3a3a3a" stroke-width="1"/><path d="M9 10.5H13.3M9 12.7H13.3" stroke="#4a4a4a" stroke-width="1.05"/></svg>
<svg style="left:350px;top:109px" width="6" height="4" viewBox="0 0 6 4"><path d="M0 0H6L3 3.2Z" fill="#666"/></svg>
<svg style="left:328px;top:126px" width="17" height="16" viewBox="0 0 17 16"><path d="M0.7 6.9L7 4.1L12.3 9.3L7.4 14.7Z" fill="#fff" stroke="#ed8733" stroke-width="1.25"/><path d="M3.6 10.6L9.8 11.9L7.4 14.4Z" fill="#f9c98a"/><path d="M7.2 3L9 1.5L14.2 7.3L12.5 9.1Z" fill="#f3f2f1" stroke="#444" stroke-width="1.15"/><path d="M11 4.2L14.8 0.9L16 2.3L12.3 5.7" fill="#f3f2f1" stroke="#444" stroke-width="1.15"/></svg>
<div class="a" style="left:376px;top:83px;width:111px;height:23px;background:#fff;border:1px solid #c6c6c6"></div>
<div class="a" style="left:487px;top:83px;width:43px;height:23px;background:#fff;border:1px solid #c6c6c6"></div>
<div class="t" style="left:379.50px;top:89.00px;font-size:12.6px;color:#444;letter-spacing:-0.315px;">Calibri</div>
<svg style="left:476.5px;top:93px" width="6" height="4" viewBox="0 0 6 4"><path d="M0 0H6L3 3.2Z" fill="#666"/></svg>
<div class="t" style="left:490.80px;top:89.00px;font-size:12.6px;color:#444;letter-spacing:-1.539px;">11</div>
<svg style="left:519.5px;top:93px" width="6" height="4" viewBox="0 0 6 4"><path d="M0 0H6L3 3.2Z" fill="#666"/></svg>
<div class="t" style="left:536.00px;top:87.00px;font-size:13.5px;color:#444;letter-spacing:0.195px;">A</div>
<svg style="left:544px;top:87px" width="6" height="4" viewBox="0 0 6 4"><path d="M0.5 3.5L3 1L5.5 3.5" fill="none" stroke="#2b88d8" stroke-width="1.3"/></svg>
<div class="t" style="left:558.00px;top:89.00px;font-size:11.5px;color:#444;letter-spacing:0.129px;">A</div>
<svg style="left:565.5px;top:87.5px" width="6" height="4" viewBox="0 0 6 4"><path d="M0.5 0.5L3 3L5.5 0.5" fill="none" stroke="#2b88d8" stroke-width="1.3"/></svg>
<div class="t" style="left:383.40px;top:119.00px;font-size:13.5px;color:#333;font-weight:bold;transform:scaleX(0.86);transform-origin:left;">B</div>
<div class="t" style="left:406.50px;top:118.00px;font-size:13.5px;color:#333;font-style:italic;font-family:'Liberation Serif',serif;font-size:14.5px;">I</div>
<div class="t" style="left:426.30px;top:119.00px;font-size:13.2px;color:#333;letter-spacing:-1.033px;">U</div>
<div class="a" style="left:426px;top:131px;width:9px;height:1px;background:#333;"></div>
<svg style="left:444.7px;top:125px" width="6" height="4" viewBox="0 0 6 4"><path d="M0 0H6L3 3.2Z" fill="#666"/></svg>
<div class="a" style="left:458px;top:116px;width:1px;height:21px;background:#d0cecc;"></div>
<svg style="left:466px;top:118px" width="16" height="15" viewBox="0 0 16 15"><rect x="0.5" y="0.5" width="14" height="14" fill="#f8f8f8"/><path d="M0 0.5H15M0 7.5H15M0.5 0V14M7.5 0V14M14.5 0V14" fill="none" stroke="#b4b4b4" stroke-dasharray="2 1.4"/><path d="M0 14.5H15" stroke="#333" stroke-width="1"/></svg>
<svg style="left:487.8px;top:125px" width="6" height="4" viewBox="0 0 6 4"><path d="M0 0H6L3 3.2Z" fill="#666"/></svg>
<div class="a" style="left:501px;top:116px;width:1px;height:21px;background:#d0cecc;"></div>
<svg style="left:509px;top:117px" width="17" height="13" viewBox="0 0 17 13"><path d="M2.6 7.7L7.6 1.7C8.4 0.7 9.8 0.9 9.8 2.3V4L12.7 6.8L7.4 12Z" fill="#fdfdfd" stroke="#444" stroke-width="1.15" stroke-linejoin="round"/><path d="M9.8 3.8V6.6" stroke="#444" stroke-width="1.1" fill="none"/><path d="M11.8 4.8C14 5 14.8 7.6 14.2 10.8" fill="none" stroke="#1e6fc0" stroke-width="1.8"/></svg>
<div class="a" style="left:509px;top:130px;width:16px;height:4px;background:#ffff00;"></div>
<svg style="left:531px;top:125px" width="6" height="4" viewBox="0 0 6 4"><path d="M0 0H6L3 3.2Z" fill="#666"/></svg>
<div class="t" style="left:546.20px;top:116.00px;font-size:15.2px;color:#444;letter-spacing:0.261px;">A</div>
<div class="a" style="left:543px;top:130px;width:16px;height:4px;background:#f00;"></div>
<svg style="left:564.6px;top:125px" width="6" height="4" viewBox="0 0 6 4"><path d="M0 0H6L3 3.2Z" fill="#666"/></svg>
<div class="a" style="left:594px;top:78px;width:14px;height:1px;background:#444;"></div>
<div class="a" style="left:596px;top:82px;width:10px;height:1px;background:#444;"></div>
<div class="a" style="left:594px;top:86px;width:14px;height:1px;background:#444;"></div>
<div class="a" style="left:616px;top:81px;width:14px;height:1px;background:#444;"></div>
<div class="a" style="left:618px;top:85px;width:10px;height:1px;background:#444;"></div>
<div class="a" style="left:616px;top:89px;width:14px;height:1px;background:#444;"></div>
<div class="a" style="left:634px;top:75px;width:22px;height:23px;background:#c8c6c4;"></div>
<div class="a" style="left:638px;top:85px;width:14px;height:1px;background:#444;"></div>
<div class="a" style="left:640px;top:89px;width:10px;height:1px;background:#444;"></div>
<div class="a" style="left:638px;top:93px;width:14px;height:1px;background:#444;"></div>
<div class="t" style="left:664.00px;top:78.00px;font-size:10.2px;color:#505050;letter-spacing:0.528px;">ab</div>
<div class="t" style="left:664.00px;top:85.00px;font-size:10.2px;color:#505050;">c</div>
<svg style="left:669px;top:86px" width="10" height="9" viewBox="0 0 10 9"><path d="M8.2 0.5C9.8 3.8 7.5 5.2 2 5.2" fill="none" stroke="#2b88d8" stroke-width="1.3"/><path d="M4.6 2.6L1.6 5.2L4.6 7.8" fill="none" stroke="#2b88d8" stroke-width="1.3"/></svg>
<div class="a" style="left:594px;top:103px;width:14px;height:1px;background:#444;"></div>
<div class="a" style="left:594px;top:107px;width:10px;height:1px;background:#444;"></div>
<div class="a" style="left:594px;top:111px;width:14px;height:1px;background:#444;"></div>
<div class="a" style="left:594px;top:115px;width:10px;height:1px;background:#444;"></div>
<div class="a" style="left:616px;top:103px;width:14px;height:1px;background:#444;"></div>
<div class="a" style="left:618px;top:107px;width:10px;height:1px;background:#444;"></div>
<div class="a" style="left:616px;top:111px;width:14px;height:1px;background:#444;"></div>
<div class="a" style="left:618px;top:115px;width:10px;height:1px;background:#444;"></div>
<div class="a" style="left:638px;top:103px;width:14px;height:1px;background:#444;"></div>
<div class="a" style="left:642px;top:107px;width:10px;height:1px;background:#444;"></div>
<div class="a" style="left:638px;top:111px;width:14px;height:1px;background:#444;"></div>
<div class="a" style="left:642px;top:115px;width:10px;height:1px;background:#444;"></div>
<svg style="left:662px;top:102px" width="15" height="15" viewBox="0 0 15 15"><rect x="0.5" y="0.5" width="14" height="14" fill="#fff" stroke="#333"/><path d="M7.5 0.5V3.5M7.5 11.5V14.5" stroke="#333"/><rect x="0.5" y="3.5" width="14" height="8" fill="#fff" stroke="#1e6fc0"/><path d="M3 7.5H12" fill="none" stroke="#1e6fc0" stroke-width="1.2"/><path d="M5 5.3L2.6 7.5L5 9.7M10 5.3L12.4 7.5L10 9.7" fill="none" stroke="#1e6fc0" stroke-width="1.2"/></svg>
<svg style="left:684px;top:109px" width="6" height="4" viewBox="0 0 6 4"><path d="M0 0H6L3 3.2Z" fill="#666"/></svg>
<div class="a" style="left:594px;top:127px;width:14px;height:1px;background:#444;"></div>
<div class="a" style="left:604px;top:131px;width:4px;height:1px;background:#444;"></div>
<div class="a" style="left:604px;top:135px;width:4px;height:1px;background:#444;"></div>
<div class="a" style="left:594px;top:139px;width:14px;height:1px;background:#444;"></div>
<svg style="left:594px;top:129px" width="9" height="8" viewBox="0 0 9 8"><path d="M0.8 4H8.4M3.8 1L0.8 4L3.8 7" fill="none" stroke="#2b88d8" stroke-width="1.3"/></svg>
<div class="a" style="left:616px;top:127px;width:14px;height:1px;background:#444;"></div>
<div class="a" style="left:626px;top:131px;width:4px;height:1px;background:#444;"></div>
<div class="a" style="left:626px;top:135px;width:4px;height:1px;background:#444;"></div>
<div class="a" style="left:616px;top:139px;width:14px;height:1px;background:#444;"></div>
<svg style="left:616px;top:129px" width="9" height="8" viewBox="0 0 9 8"><path d="M0.4 4H8M5 1L8 4L5 7" fill="none" stroke="#2b88d8" stroke-width="1.3"/></svg>
<div class="a" style="left:638px;top:124px;width:1px;height:21px;background:#d0cecc;"></div>
<div class="t" style="left:645px;top:124px;font-size:11px;color:#444;transform:rotate(-38deg);transform-origin:left bottom;left:648.5px;top:127.5px">ab</div>
<svg style="left:650px;top:129px" width="13" height="13" viewBox="0 0 13 13"><path d="M1.2 11.8L11.6 1.4M7.3 1.3H11.7V5.7" fill="none" stroke="#2b88d8" stroke-width="1.3"/></svg>
<svg style="left:666px;top:133px" width="6" height="4" viewBox="0 0 6 4"><path d="M0 0H6L3 3.2Z" fill="#666"/></svg>
<div class="a" style="left:710px;top:75px;width:78px;height:23px;background:#fff;border:1px solid #c6c6c6"></div>
<div class="t" style="left:713.70px;top:81.00px;font-size:12.6px;color:#444;letter-spacing:-0.818px;">General</div>
<svg style="left:777.5px;top:85px" width="6" height="4" viewBox="0 0 6 4"><path d="M0 0H6L3 3.2Z" fill="#666"/></svg>
<div class="t" style="left:716.60px;top:100.00px;font-size:19px;color:#333;transform:scaleX(0.72);transform-origin:left;">$</div>
<svg style="left:735px;top:109px" width="6" height="4" viewBox="0 0 6 4"><path d="M0 0H6L3 3.2Z" fill="#666"/></svg>
<div class="t" style="left:747.40px;top:102.00px;font-size:18.5px;color:#444;letter-spacing:-0.851px;">%</div>
<div class="t" style="left:771.60px;top:97.00px;font-size:38px;color:#222;font-weight:bold;font-family:'Liberation Serif',serif;">’</div>
<div class="t" style="left:719.60px;top:126.00px;font-size:9px;color:#6e6e6e;letter-spacing:0.597px;">.0</div>
<div class="t" style="left:714.60px;top:134.00px;font-size:9px;color:#6e6e6e;letter-spacing:0.397px;">.00</div>
<svg style="left:713px;top:127px" width="9" height="8" viewBox="0 0 9 8"><path d="M0.8 3.8H8.8M4 0.6L0.8 3.8L4 7" fill="none" stroke="#2b88d8" stroke-width="1.15"/></svg>
<div class="t" style="left:736.80px;top:126.00px;font-size:9px;color:#6e6e6e;letter-spacing:0.397px;">.00</div>
<div class="t" style="left:742.00px;top:134.00px;font-size:9px;color:#6e6e6e;letter-spacing:0.497px;">.0</div>
<svg style="left:735px;top:134px" width="9" height="8" viewBox="0 0 9 8"><path d="M0.2 3.8H8.2M5 0.6L8.2 3.8L5 7" fill="none" stroke="#2b88d8" stroke-width="1.15"/></svg>
</div></body></html>
